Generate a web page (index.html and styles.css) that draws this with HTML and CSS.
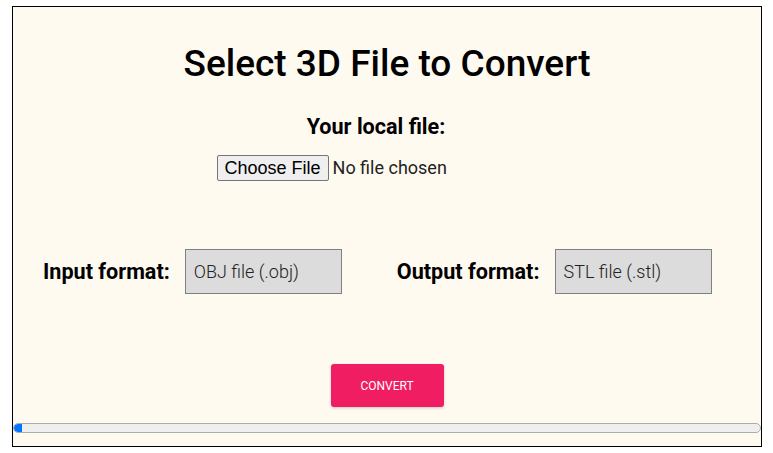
FILE: index.html
```html
<!DOCTYPE html>
<html lang="en">
<head>
<meta charset="utf-8">
<title>Select 3D File to Convert</title>
<link rel="stylesheet" href="styles.css">
</head>
<body>
<div class="panel">
  <h1 class="title">Select 3D File to Convert</h1>
  <label class="file-label" for="file">Your local file:</label>
  <div class="file-row">
    <input class="file-input" id="file" type="file">
  </div>
  <div class="formats">
    <div class="format-group">
      <span class="format-label">Input format:</span>
      <div class="format-box">OBJ file (.obj)</div>
    </div>
    <div class="format-group">
      <span class="format-label">Output format:</span>
      <div class="format-box">STL file (.stl)</div>
    </div>
  </div>
  <div class="actions">
    <button class="convert" type="button">CONVERT</button>
  </div>
  <div class="progress"><div class="progress-fill" style="width: 8px"></div></div>
</div>
</body>
</html>
```

FILE: styles.css
```css
html, body {
  margin: 0;
  padding: 0;
  background: #ffffff;
}
body {
  font-family: Roboto, "Noto Sans", sans-serif;
  color: #000;
}
.panel {
  box-sizing: border-box;
  width: 750px;
  height: 441px;
  margin: 6px 0 0 12px;
  border: 1px solid #000;
  background: #fffaf0;
  display: flex;
  flex-direction: column;
}
.title {
  margin: 35px 0 0 0;
  font-size: 37px;
  line-height: 43px;
  font-weight: 500;
  text-align: center;
}
.file-label {
  display: block;
  margin-top: 30px;
  padding-right: 22px;
  font-size: 21.6px;
  line-height: 24px;
  font-weight: 700;
  text-align: center;
}
.file-row {
  display: flex;
  justify-content: center;
  margin-top: 16px;
}
.file-input {
  width: 341px;
  height: 26px;
  margin: 0;
  padding: 0;
  font-family: Roboto, sans-serif;
  font-size: 18px;
  color: #222;
}
.file-input::file-selector-button {
  font-family: "Liberation Sans", Arial, sans-serif;
  font-size: 18px;
  height: 26px;
  padding: 0 7px;
  margin: 0 4px 0 0;
  background: #efefef;
  border: 1px solid #767676;
  border-radius: 2px;
  color: #000;
}
.formats {
  display: flex;
  align-items: center;
  gap: 55px;
  margin-top: 68px;
  padding-left: 30px;
}
.format-group {
  display: flex;
  align-items: center;
  gap: 15px;
}
.format-label {
  font-size: 21.6px;
  font-weight: 700;
  line-height: 24px;
}
.format-box {
  box-sizing: border-box;
  width: 157px;
  height: 45px;
  padding: 0 8px;
  display: flex;
  align-items: center;
  background: #dcdcdc;
  border: 1px solid #808080;
  font-size: 18px;
  font-weight: 300;
  color: #222;
}
.actions {
  display: flex;
  justify-content: center;
  margin-top: 70px;
}
.convert {
  width: 113px;
  height: 43px;
  border: none;
  border-radius: 3px;
  background: #f01d62;
  color: #fff;
  font-family: Roboto, sans-serif;
  font-size: 12px;
  font-weight: 400;
  box-shadow: 0 1px 3px rgba(0,0,0,0.2);
}
.progress {
  box-sizing: border-box;
  margin-top: 16px;
  height: 10px;
  border: 1px solid #ababab;
  border-radius: 5px;
  background: #efefef;
  overflow: hidden;
}
.progress-fill {
  height: 100%;
  background: #0075ff;
  border-radius: 5px 0 0 5px;
}
```
